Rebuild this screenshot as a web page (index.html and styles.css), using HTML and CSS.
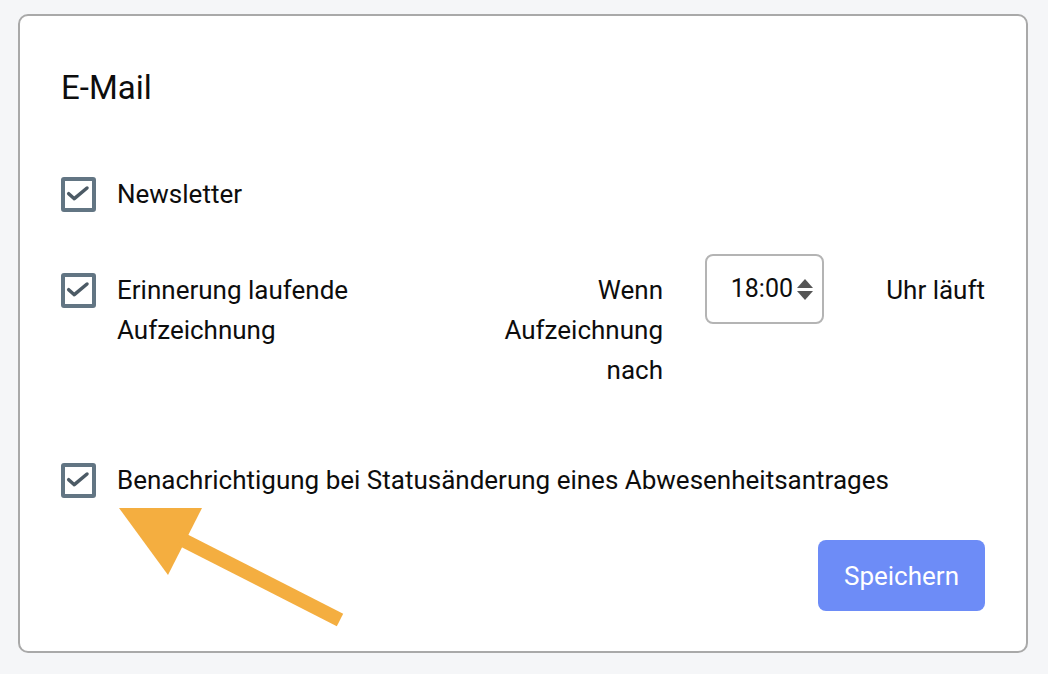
FILE: index.html
```html
<!DOCTYPE html>
<html lang="de">
<head>
  <meta charset="UTF-8" />
  <title>E-Mail</title>
  <link rel="stylesheet" href="styles.css">
</head>
<body>
  <div class="card">
    <div class="card-title">E-Mail</div>

    <div class="option option-first">
      <div class="check-wrap">
        <span class="checkbox">
          <svg viewBox="0 0 27 27" width="27" height="27"><path d="M3.7 12.7 L9.3 17.7 L22 7" /></svg>
        </span>
      </div>
      <div class="option-label">Newsletter</div>
    </div>

    <div class="option option-reminder">
      <div class="check-wrap">
        <span class="checkbox">
          <svg viewBox="0 0 27 27" width="27" height="27"><path d="M3.7 12.7 L9.3 17.7 L22 7" /></svg>
        </span>
      </div>
      <div class="option-label">Erinnerung laufende Aufzeichnung</div>
      <div class="hint">Wenn Aufzeichnung nach</div>
      <div class="time-input">
        <span class="time-value">18:00</span>
        <span class="spin">
          <span class="spin-up"></span>
          <span class="spin-down"></span>
        </span>
      </div>
      <div class="suffix">Uhr läuft</div>
    </div>

    <div class="option option-status">
      <div class="check-wrap">
        <span class="checkbox">
          <svg viewBox="0 0 27 27" width="27" height="27"><path d="M3.7 12.7 L9.3 17.7 L22 7" /></svg>
        </span>
      </div>
      <div class="option-label">Benachrichtigung bei Statusänderung eines Abwesenheitsantrages</div>
    </div>

    <div class="actions">
      <button class="save-btn" type="button">Speichern</button>
    </div>

    <!-- annotation arrow -->
    <svg class="pointer-arrow" width="240" height="130" viewBox="0 0 240 130">
      <polygon points="0,0 83,0 49,67" />
      <line x1="62" y1="31" x2="221" y2="112" />
    </svg>
  </div>
</body>
</html>
```

FILE: styles.css
```css
body {
  background: #f5f6f8;
  color: #111;
  font-family: Roboto, "Liberation Sans", sans-serif;
  margin: 0;
  padding: 14px 0 0 18px;
}
.card {
  position: relative;
  width: 1010px;
  box-sizing: border-box;
  background: #fff;
  border: 2px solid #a9a9a9;
  border-radius: 10px;
  padding: 41px 41px 40px 41px;
  display: flex;
  flex-direction: column;
}
.card-title {
  font-size: 33px;
  line-height: 40px;
  margin-top: 11px;
  color: #0d0d0d;
}
.option {
  display: flex;
  align-items: flex-start;
  gap: 21px;
  font-size: 26px;
  line-height: 40px;
  color: #0d0d0d;
}
.option-first {
  margin-top: 66px;
}
.option-reminder {
  margin-top: 56px;
}
.option-status {
  margin-top: 70px;
}
.check-wrap {
  height: 40px;
  display: flex;
  align-items: center;
}
.checkbox {
  width: 35px;
  height: 35px;
  box-sizing: border-box;
  border: 4px solid #627583;
  border-radius: 3px;
  display: block;
}
.checkbox svg {
  display: block;
  fill: none;
  stroke: #4c5a65;
  stroke-width: 3.5;
  stroke-linecap: round;
  stroke-linejoin: round;
}
.option-label {
  flex: 1;
}
.hint {
  width: 200px;
  text-align: right;
}
.time-input {
  width: 119px;
  height: 70px;
  box-sizing: border-box;
  margin-top: -16px;
  margin-left: 21px;
  border: 2px solid #b4b4b4;
  border-radius: 8px;
  display: flex;
  align-items: center;
  justify-content: flex-end;
  gap: 4px;
  padding-right: 9px;
  font-size: 25px;
}
.spin {
  display: flex;
  flex-direction: column;
  gap: 3px;
}
.spin-up,
.spin-down {
  width: 0;
  height: 0;
  border-left: 8px solid transparent;
  border-right: 8px solid transparent;
}
.spin-up {
  border-bottom: 9px solid #555;
}
.spin-down {
  border-top: 9px solid #555;
}
.suffix {
  width: 140px;
  text-align: right;
}
.actions {
  display: flex;
  justify-content: flex-end;
  margin-top: 40px;
}
.save-btn {
  background: #6d8cf7;
  color: #fff;
  border: none;
  border-radius: 8px;
  height: 71px;
  width: 167px;
  padding: 0;
  font-family: Roboto, "Liberation Sans", sans-serif;
  font-size: 26px;
  cursor: pointer;
}
.pointer-arrow {
  position: absolute;
  left: 99px;
  top: 492px;
}
.pointer-arrow polygon {
  fill: #f4ae40;
}
.pointer-arrow line {
  stroke: #f4ae40;
  stroke-width: 14;
}
```
